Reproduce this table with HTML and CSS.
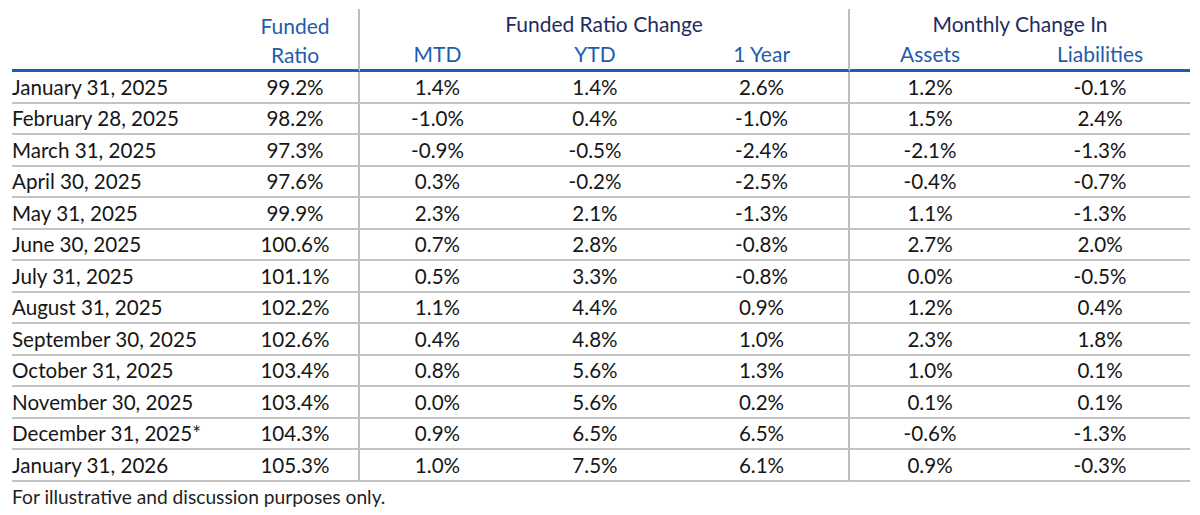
FILE: index.html
```html
<!DOCTYPE html>
<html lang="en">
<head>
<meta charset="utf-8">
<title>Funded Ratio</title>
<link rel="stylesheet" href="styles.css">
</head>
<body>
<div class="wrap">
<table class="fr">
  <colgroup>
    <col class="c-label"><col class="c-fr"><col class="c-mtd"><col class="c-ytd"><col class="c-1y"><col class="c-as"><col class="c-li">
  </colgroup>
  <thead>
    <tr class="h1">
      <th rowspan="2" class="blank"></th>
      <th rowspan="2" class="sub vr fr-head">Funded<br>Ratio</th>
      <th colspan="3" class="grp vr">Funded Ratio Change</th>
      <th colspan="2" class="grp">Monthly Change In</th>
    </tr>
    <tr class="h2">
      <th class="sub">MTD</th>
      <th class="sub">YTD</th>
      <th class="sub vr">1 Year</th>
      <th class="sub">Assets</th>
      <th class="sub">Liabilities</th>
    </tr>
  </thead>
  <tbody>
    <tr><td>January 31, 2025</td><td class="vr">99.2%</td><td>1.4%</td><td>1.4%</td><td class="vr">2.6%</td><td>1.2%</td><td>-0.1%</td></tr>
    <tr><td>February 28, 2025</td><td class="vr">98.2%</td><td>-1.0%</td><td>0.4%</td><td class="vr">-1.0%</td><td>1.5%</td><td>2.4%</td></tr>
    <tr><td>March 31, 2025</td><td class="vr">97.3%</td><td>-0.9%</td><td>-0.5%</td><td class="vr">-2.4%</td><td>-2.1%</td><td>-1.3%</td></tr>
    <tr><td>April 30, 2025</td><td class="vr">97.6%</td><td>0.3%</td><td>-0.2%</td><td class="vr">-2.5%</td><td>-0.4%</td><td>-0.7%</td></tr>
    <tr><td>May 31, 2025</td><td class="vr">99.9%</td><td>2.3%</td><td>2.1%</td><td class="vr">-1.3%</td><td>1.1%</td><td>-1.3%</td></tr>
    <tr><td>June 30, 2025</td><td class="vr">100.6%</td><td>0.7%</td><td>2.8%</td><td class="vr">-0.8%</td><td>2.7%</td><td>2.0%</td></tr>
    <tr><td>July 31, 2025</td><td class="vr">101.1%</td><td>0.5%</td><td>3.3%</td><td class="vr">-0.8%</td><td>0.0%</td><td>-0.5%</td></tr>
    <tr><td>August 31, 2025</td><td class="vr">102.2%</td><td>1.1%</td><td>4.4%</td><td class="vr">0.9%</td><td>1.2%</td><td>0.4%</td></tr>
    <tr><td>September 30, 2025</td><td class="vr">102.6%</td><td>0.4%</td><td>4.8%</td><td class="vr">1.0%</td><td>2.3%</td><td>1.8%</td></tr>
    <tr><td>October 31, 2025</td><td class="vr">103.4%</td><td>0.8%</td><td>5.6%</td><td class="vr">1.3%</td><td>1.0%</td><td>0.1%</td></tr>
    <tr><td>November 30, 2025</td><td class="vr">103.4%</td><td>0.0%</td><td>5.6%</td><td class="vr">0.2%</td><td>0.1%</td><td>0.1%</td></tr>
    <tr><td>December 31, 2025*</td><td class="vr">104.3%</td><td>0.9%</td><td>6.5%</td><td class="vr">6.5%</td><td>-0.6%</td><td>-1.3%</td></tr>
    <tr><td>January 31, 2026</td><td class="vr">105.3%</td><td>1.0%</td><td>7.5%</td><td class="vr">6.1%</td><td>0.9%</td><td>-0.3%</td></tr>
  </tbody>
</table>
<p class="note">For illustrative and discussion purposes only.</p>
</div>
</body>
</html>
```
FILE: styles.css
```css
html, body {
  margin: 0;
  padding: 0;
  background: #ffffff;
}
body {
  font-family: Lato, "Open Sans", "Liberation Sans", sans-serif;
  color: #161616;
}
.wrap {
  padding: 9px 10px 0 12px;
}
.fr {
  width: 1178px;
  border-collapse: separate;
  border-spacing: 0;
  table-layout: fixed;
  font-size: 20.6px;
}
.c-label { width: 220px; }
.c-fr { width: 128px; }
.c-mtd { width: 155px; }
.c-ytd { width: 160px; }
.c-1y { width: 175px; }
.c-as { width: 160px; }
.c-li { width: 180px; }

.fr th {
  font-weight: normal;
  padding: 0;
  text-align: center;
}
.h1 th {
  height: 29px;
  vertical-align: middle;
}
.h2 th {
  height: 30px;
  border-bottom: 3px solid #1f5cac;
}
.fr th.blank,
.fr th.fr-head {
  border-bottom: 3px solid #1f5cac;
}
.grp {
  color: #1f2c62;
  font-size: 21px;
  padding-top: 1px;
}
.sub {
  color: #1f5cac;
  font-size: 21px;
}
.fr-head {
  line-height: 29px;
  padding-top: 2px !important;
}
.h2 .sub:nth-child(3) {
  text-align: right;
  padding-right: 58px;
}
.fr td {
  height: 29.5px;
  padding: 0;
  text-align: center;
  border-bottom: 2px solid #c3c3c3;
  white-space: nowrap;
}
.fr td:first-child {
  text-align: left;
}
.vr {
  border-right: 2px solid #bdbdbd;
}
.note {
  margin: 3px 0 0 0;
  font-size: 19.2px;
  color: #1e1e1e;
}
```
